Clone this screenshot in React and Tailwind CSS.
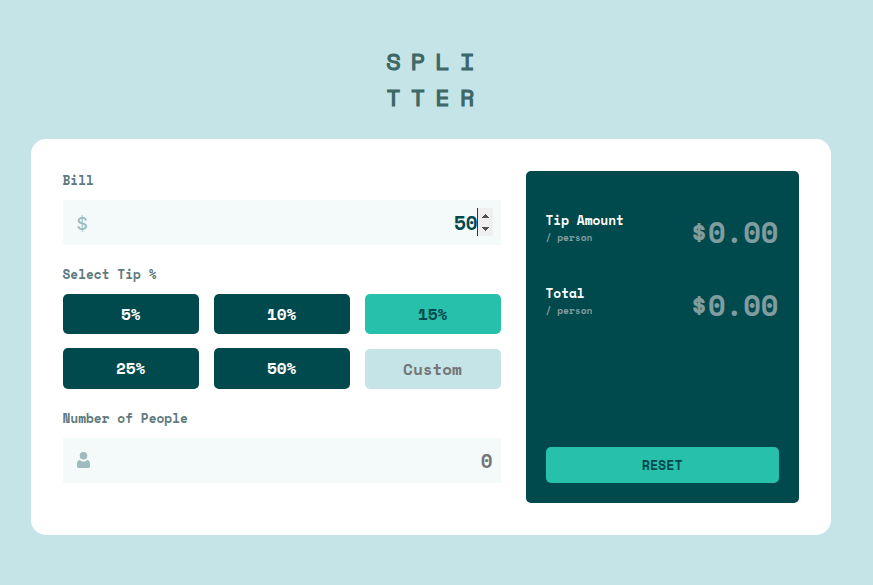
const mono = "font-['Space_Mono','Liberation_Mono',monospace]";

function Label({ children }) {
  return (
    <div className="flex h-5 items-center -indent-[0.5px] text-[12.8px] font-bold whitespace-pre text-[#5e7a7d]">
      {children}
    </div>
  );
}

function TipButton({ children, active, tall }) {
  return (
    <button
      className={`${tall ? 'h-[41px] pb-[2px]' : 'h-10'} w-[136px] rounded-[5px] pr-[0.6px] text-[16px] font-bold ${
        active ? 'bg-[#26c0ab] text-[#00494d]' : 'bg-[#00494d] text-white'
      }`}
    >
      {children}
    </button>
  );
}

function ResultRow({ title }) {
  return (
    <div className="flex h-[73px] items-start justify-between">
      <div className="flex flex-col -indent-[0.5px]">
        <span className="h-[18px] text-[12.8px] leading-[19px] font-bold text-white">{title}</span>
        <span className="h-4 text-[9.6px] leading-4 font-bold text-[#7f9c9f]">/ person</span>
      </div>
      <div className="mt-[3px] mr-[0.6px] flex h-9 items-center font-bold text-[#7f9c9f]">
        <span className="text-[28.8px] leading-9">$0.00</span>
      </div>
    </div>
  );
}

export default function App() {
  return (
    <div className={`h-[585px] w-[873px] overflow-hidden bg-[#c5e4e7] ${mono}`}>
      <h1 className="pt-[43px] pl-[386.2px] text-[23.5px] leading-9 font-normal tracking-[10.2px] text-[#3d6666] [-webkit-text-stroke:1.2px_#3d6666]">
        SPLI
        <br />
        TTER
      </h1>

      <main className="mt-[24px] ml-[31px] flex h-[396px] w-[800px] gap-[25px] rounded-[15px] bg-white p-8">
        <section className="w-[438px]">
          <Label>Bill</Label>
          <div className="mt-[9px] flex h-[45px] items-center justify-between bg-[#f4fafa] pr-2 pl-[13.5px]">
            <span className="mt-[3px] font-[Inter,sans-serif] text-[17.5px] leading-5 font-medium text-[#9ebbbd]">$</span>
            <div className="mb-px flex h-7 items-center text-[19.2px] font-bold text-[#00494d]">
              <span className="-mr-[0.6px] pt-[3px]">50</span>
              <span className="h-7 w-px bg-[#00494d]" />
              <span className="flex h-7 w-[15px] flex-col items-center justify-center bg-[#efefef]">
                <svg width="15" height="28" viewBox="0 0 15 28" fill="#505050" shapeRendering="crispEdges">
                  <path d="M4 10h7v-1h-1v-1h-1v-1h-1v-1h-1v1h-1v1h-1v1h-1zM4 19h7v1h-1v1h-1v1h-1v1h-1v-1h-1v-1h-1v-1h-1z" />
                </svg>
              </span>
            </div>
          </div>

          <div className="mt-5">
            <Label>Select Tip %</Label>
          </div>
          <div className="mt-[9px] flex justify-between">
            <TipButton>5%</TipButton>
            <TipButton>10%</TipButton>
            <TipButton active>15%</TipButton>
          </div>
          <div className="mt-[14px] flex items-end justify-between">
            <TipButton tall>25%</TipButton>
            <TipButton tall>50%</TipButton>
            <div className="flex h-10 w-[136px] items-center justify-center rounded-[5px] bg-[#c5e4e7] pr-px text-[16px] font-bold text-[#757575]">
              Custom
            </div>
          </div>

          <div className="mt-5">
            <Label>Number of People</Label>
          </div>
          <div className="mt-[9px] flex h-[45px] items-center justify-between bg-[#f4fafa] pr-[8.4px] pl-[14px]">
            <svg className="mb-px" width="13" height="16" viewBox="0 0 13 16" fill="#9ebbbd">
              <path d="M10.313 8.044A5.033 5.033 0 0 1 6.532 9.8a5.033 5.033 0 0 1-3.782-1.756C1 8.35 0 9.6 0 12v1.9C0 15.1.8 16 2 16h9c1.200 0 2-.9 2-2.100V12c0-2.400-1-3.650-2.687-3.956Z" />
              <circle cx="6.500" cy="3.800" r="3.800" />
            </svg>
            <span className="pt-[2px] text-[19.2px] font-bold text-[#757575]">0</span>
          </div>
        </section>

        <section className="flex h-[332px] w-[273px] flex-col rounded-[5px] bg-[#00494d] px-5 pt-10 pb-5">
          <ResultRow title="Tip Amount" />
          <ResultRow title="Total" />
          <button className="mt-auto h-9 w-full rounded-[5px] bg-[#26c0ab] pr-[0.6px] text-[13.333px] font-bold text-[#00494d]">
            RESET
          </button>
        </section>
      </main>
    </div>
  );
}
